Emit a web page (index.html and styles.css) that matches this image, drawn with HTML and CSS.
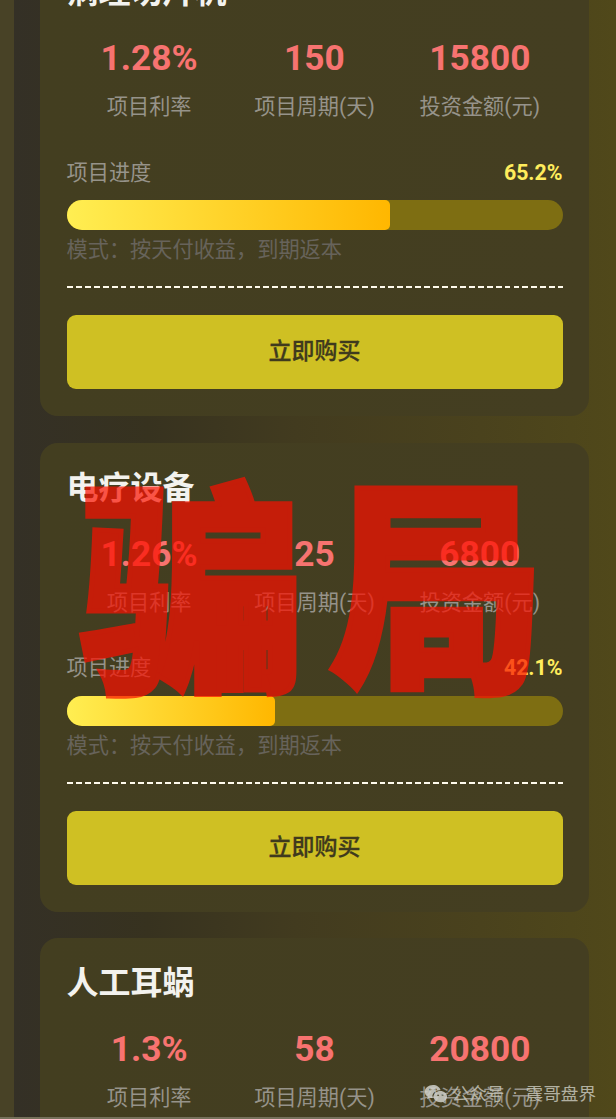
FILE: index.html
```html
<!DOCTYPE html>
<html lang="zh-CN">
<head>
<meta charset="utf-8">
<title>项目列表</title>
<link rel="stylesheet" href="styles.css">
</head>
<body>
<main class="page">
  <section class="card">
    <h2 class="title">病理切片机</h2>
    <div class="stats">
      <div class="stat"><b>1.28%</b><span>项目利率</span></div>
      <div class="stat"><b>150</b><span>项目周期(天)</span></div>
      <div class="stat"><b>15800</b><span>投资金额(元)</span></div>
    </div>
    <div class="progress-head"><span>项目进度</span><b>65.2%</b></div>
    <div class="track"><div class="fill" style="width:65.2%"></div></div>
    <p class="mode">模式：按天付收益，到期返本</p>
    <div class="divider"></div>
    <button class="buy">立即购买</button>
  </section>
  <section class="card">
    <h2 class="title">电疗设备</h2>
    <div class="stats">
      <div class="stat"><b>1.26%</b><span>项目利率</span></div>
      <div class="stat"><b>25</b><span>项目周期(天)</span></div>
      <div class="stat"><b>6800</b><span>投资金额(元)</span></div>
    </div>
    <div class="progress-head"><span>项目进度</span><b>42.1%</b></div>
    <div class="track"><div class="fill" style="width:42.1%"></div></div>
    <p class="mode">模式：按天付收益，到期返本</p>
    <div class="divider"></div>
    <button class="buy">立即购买</button>
  </section>
  <section class="card">
    <h2 class="title">人工耳蜗</h2>
    <div class="stats">
      <div class="stat"><b>1.3%</b><span>项目利率</span></div>
      <div class="stat"><b>58</b><span>项目周期(天)</span></div>
      <div class="stat"><b>20800</b><span>投资金额(元)</span></div>
    </div>
  </section>
  <svg class="stamp" width="616" height="300" viewBox="0 0 616 300"><text transform="translate(79 231)">骗</text><text transform="translate(328 230) scale(.96 1.01)">局</text></svg>
  <div class="watermark">
    <svg class="wechat" width="24" height="20" viewBox="0 0 24 20">
      <path fill-rule="evenodd" d="M9 1C4.300 1 .8 4 .8 7.700c0 2.100 1.100 3.900 2.900 5.100L3 15.200l2.900-1.500c.9.300 1.800.4 2.700.4C7.600 9.600 11 6 16.600 6.200 15.800 3 12.700 1 9 1ZM6.200 4.400a1.100 1.100 0 1 1 0 2.200 1.100 1.100 0 0 1 0-2.200Zm5.600 0a1.100 1.100 0 1 1 0 2.200 1.100 1.100 0 0 1 0-2.200Z"/>
      <path fill-rule="evenodd" d="M16.300 7c-3.800 0-6.800 2.500-6.800 5.600s3 5.600 6.800 5.600c.8 0 1.600-.1 2.300-.3l2.300 1.200-.6-2c1.700-1 2.800-2.700 2.800-4.500 0-3.100-3-5.600-6.800-5.600Zm-2.200 2.900a1 1 0 1 1 0 2 1 1 0 0 1 0-2Zm4.500 0a1 1 0 1 1 0 2 1 1 0 0 1 0-2Z"/>
    </svg>
    <span>公众号 · 震哥盘界</span>
  </div>
</main>
</body>
</html>
```
FILE: styles.css
```css
* { box-sizing: border-box; }
body { margin: 0; font-family: Roboto, "Noto Sans CJK SC", sans-serif; }
.page {
  position: relative;
  height: 1119px;
  overflow: hidden;
  padding: 0 27px 0 40px;
  background: linear-gradient(90deg, #484226 14px, #343026 14px, #37321f 24%, #423b1f 48%, #4a421d 78%, #50481a 100%);
  border-bottom: 2px solid #76715b;
}
.card {
  display: flex;
  flex-direction: column;
  height: 469px;
  margin-bottom: 26.500px;
  padding: 27px 26.500px 26px;
  border-radius: 18px;
  background: linear-gradient(90deg, #433e20, #443e21);
}
.card:first-child { margin-top: -52.700px; }
.title { margin: 0; font-size: 32px; line-height: 36px; font-weight: 700; color: #f3f2ee; }
.stats { display: grid; grid-template-columns: repeat(3, 1fr); margin-top: 26px; }
.stat { display: flex; flex-direction: column; align-items: center; }
.stat b { font-size: 35.300px; line-height: 44px; color: #f77370; }
.stat span { margin-top: 11px; font-size: 21.200px; line-height: 32px; color: #96938a; white-space: nowrap; }
.progress-head {
  display: flex;
  justify-content: space-between;
  margin-top: 33.500px;
  font-size: 21.200px;
  line-height: 32px;
  color: #96938a;
}
.progress-head b { font-size: 21.300px; color: #ffec5c; }
.track { flex: none; height: 30px; margin-top: 11.500px; border-radius: 15px; overflow: hidden; background: #7e6e12; }
.fill { height: 100%; border-radius: 0 5px 5px 0; background: linear-gradient(90deg, #ffee52, #ffb700); }
.mode { margin: 4px 0 0; font-size: 21.200px; line-height: 32px; color: #67635b; }
.divider {
  flex: none;
  height: 2px;
  margin-top: 20px;
  background: repeating-linear-gradient(90deg, #fffbed 0 5.900px, transparent 5.900px 8.930px);
}
.buy {
  height: 74px;
  flex: none;
  margin-top: 27px;
  padding: 0;
  border: 0;
  border-radius: 9px;
  background: #cfc023;
  color: #3f3a1d;
  font: 500 23px/34px Roboto, "Noto Sans CJK SC", sans-serif;
  -webkit-text-stroke: .3px #3f3a1d;
}
.stamp { position: absolute; left: 0; top: 444px; opacity: .7; }
.stamp text {
  font: 900 226px "Noto Sans CJK SC", sans-serif;
  fill: #fc1000;
  stroke: #fc1000;
  stroke-width: 5px;
  stroke-linejoin: miter;
}
.watermark {
  position: absolute;
  right: 20px;
  bottom: 9px;
  display: flex;
  align-items: center;
  gap: 4px;
  font-size: 17.600px;
  word-spacing: 4px;
  line-height: 28px;
  color: #c5c4b8;
  opacity: .85;
}
.wechat { fill: #d0d1cb; }
```
